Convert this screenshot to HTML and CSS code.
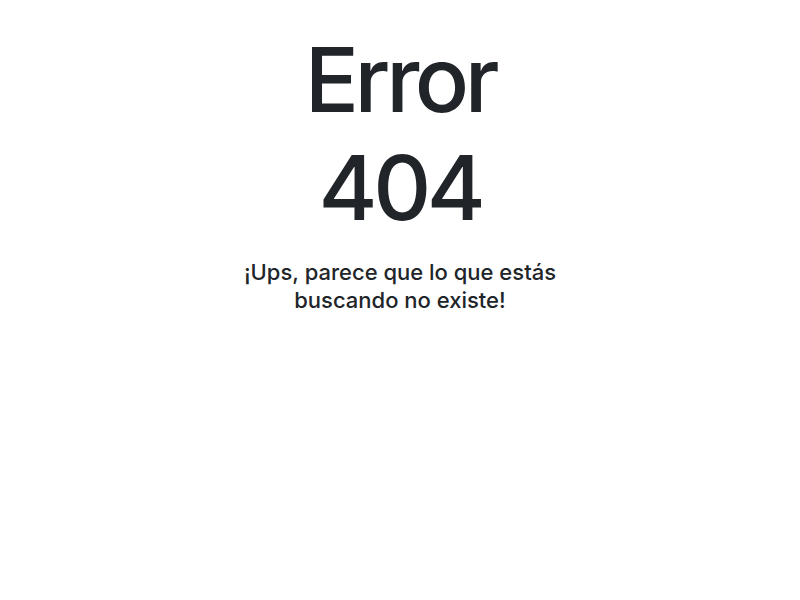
FILE: index.html
```html
<!DOCTYPE html>
<html lang="es">
<head>
<meta charset="utf-8">
<title>Error 404</title>
<link rel="stylesheet" href="styles.css">
</head>
<body>
<main class="page">
  <div class="box">
    <h1 class="title">Error 404</h1>
    <p class="message">¡Ups, parece que lo que estás buscando no existe!</p>
  </div>
</main>
</body>
</html>
```

FILE: styles.css
```css
html, body {
  margin: 0;
  padding: 0;
  background: #ffffff;
}
body {
  font-family: Inter, "Noto Sans", sans-serif;
  color: #212529;
}
.page {
  display: flex;
  justify-content: center;
  padding-top: 26px;
}
.box {
  width: 330px;
  text-align: center;
}
.title {
  margin: 0;
  font-size: 90px;
  line-height: 108px;
  font-weight: 500;
  letter-spacing: -4.4px;
}
.message {
  margin: 16px 0 0;
  font-size: 22px;
  line-height: 28px;
  font-weight: 500;
}
```
